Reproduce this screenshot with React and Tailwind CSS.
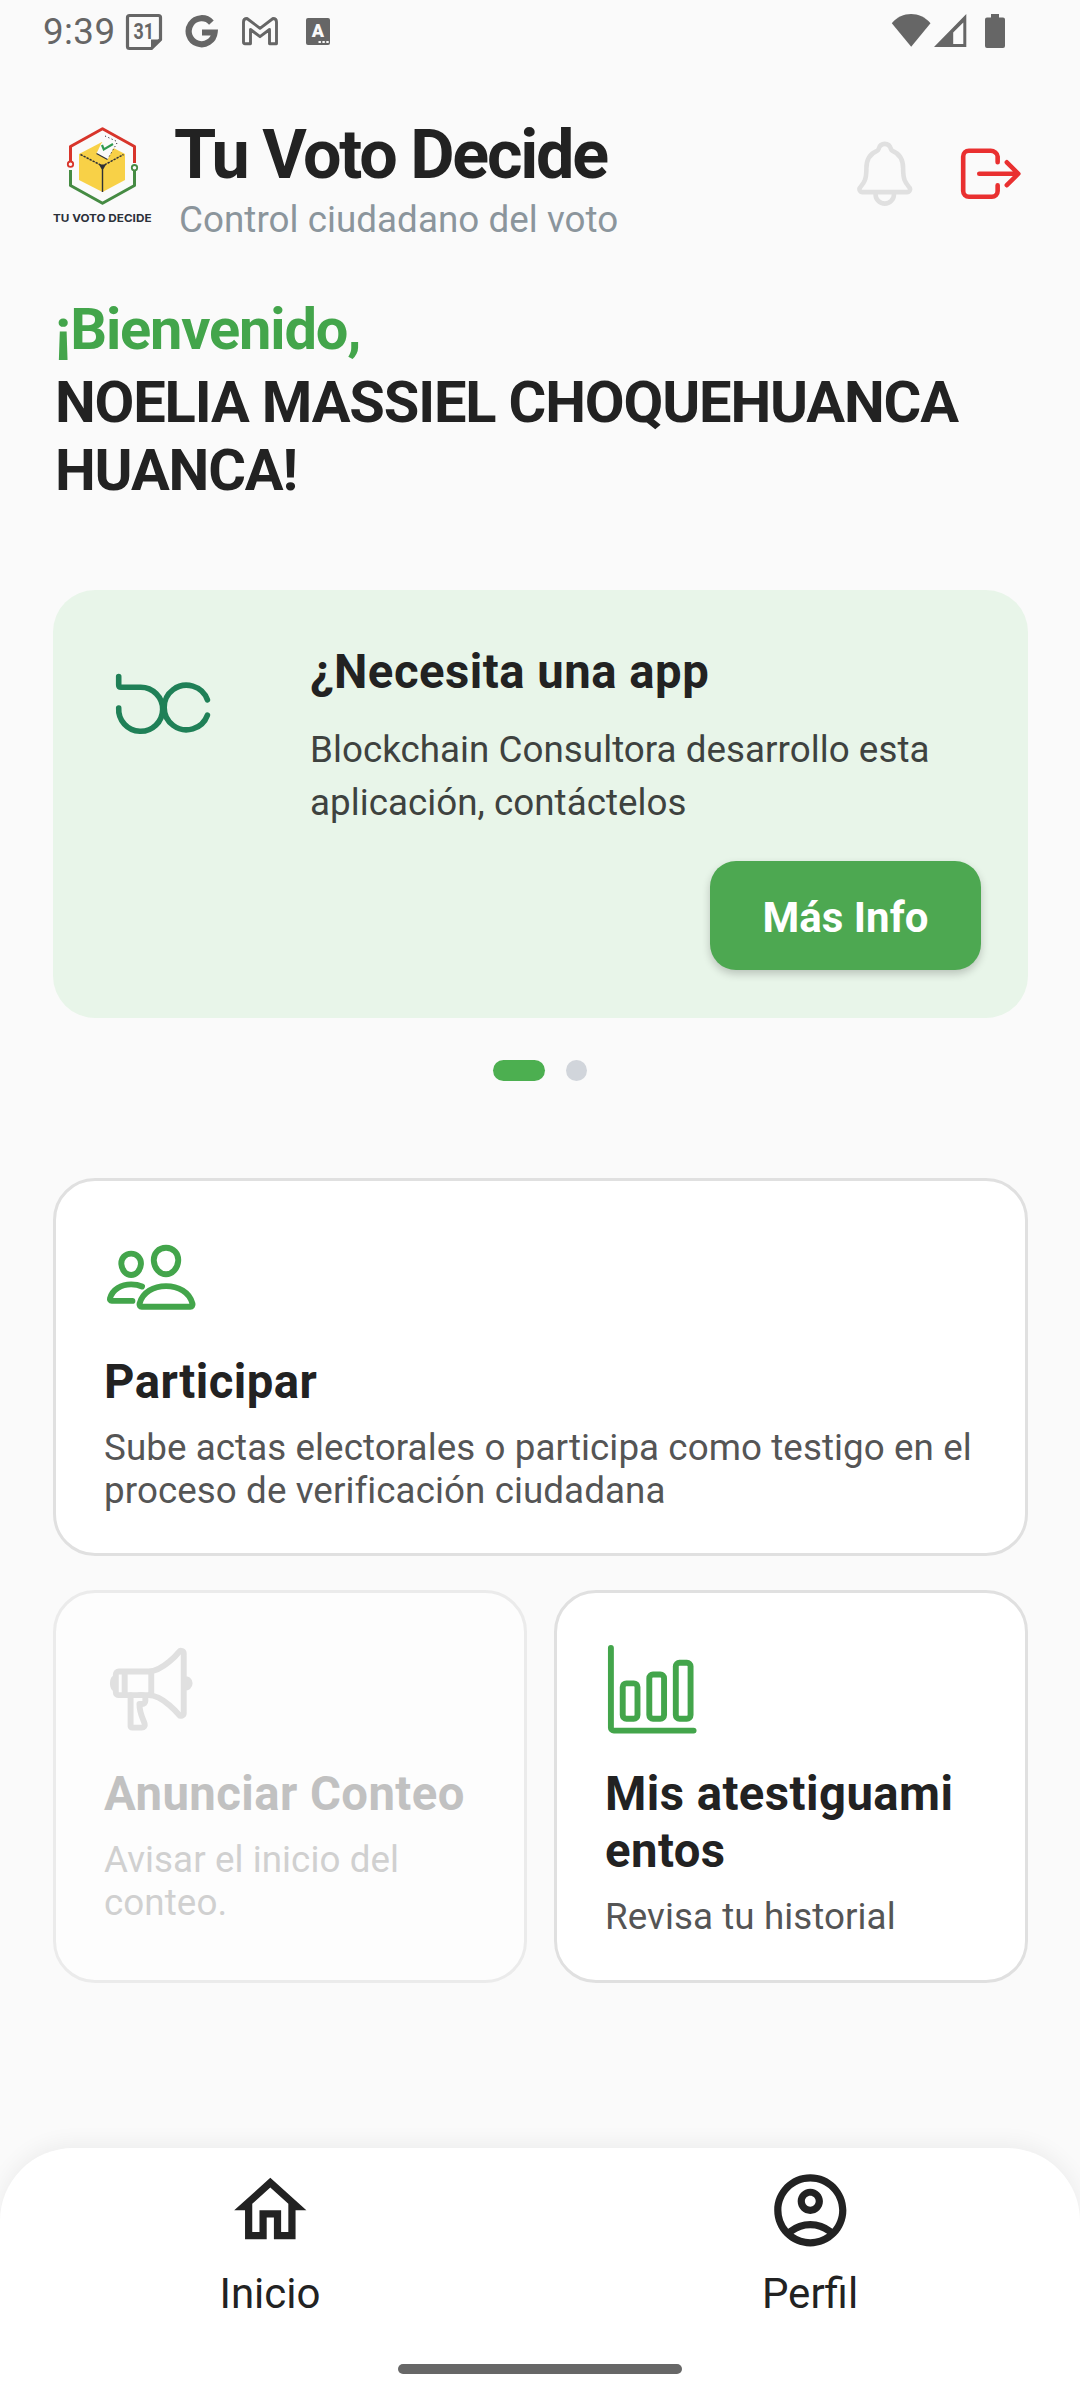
import React from "react";
import {
  IoNotificationsOutline,
  IoLogOutOutline,
  IoPeopleOutline,
  IoMegaphoneOutline,
  IoBarChartOutline,
} from "react-icons/io5";
import { MdOutlineHome, MdOutlineAccountCircle } from "react-icons/md";

function StatusBar() {
  return (
    <div className="flex h-[60px] shrink-0 items-start pl-[43px] pr-[75px] text-[#666666]">
      <span className="mt-[10px] w-[72px] whitespace-nowrap text-[36.75px] leading-[43px] tracking-[0.4px]">9:39</span>
      <svg className="ml-[10px] mt-[13px] h-[38px] w-[38px]" viewBox="0 0 38 38" fill="none">
        <path d="M4.5 2.5H33.5Q35.5 2.5 35.5 4.5V26.5L26.5 35.5H4.5Q2.5 35.5 2.5 33.5V4.5Q2.5 2.5 4.5 2.5Z" stroke="currentColor" strokeWidth="3.2" />
        <path d="M26 36V26.5H36Z" fill="currentColor" />
        <text x="8.5" y="26" fontSize="22" fontWeight="700" textLength="20.5" lengthAdjust="spacingAndGlyphs" fill="currentColor">31</text>
      </svg>
      <svg className="ml-[22px] mt-[15px] h-[34px] w-[34px]" viewBox="0 0 34 34" fill="none">
        <path d="M26.4 7.6A13 13 0 1 0 29.6 17.5H17" stroke="currentColor" strokeWidth="6.2" />
      </svg>
      <svg className="ml-[22px] mt-[15px] h-[34px] w-[38px]" viewBox="0 0 38 34" fill="none">
        <path d="M2.5 7Q2.5 3.5 6 3.5L19 13.3L32 3.5Q35.5 3.5 35.5 7V28.7H28.5V14.5L19 21.7L9.5 14.5V28.7H4Q2.5 28.7 2.5 27Z" stroke="currentColor" strokeWidth="2.9" strokeLinejoin="round" />
      </svg>
      <svg className="ml-[27px] mt-[18px] h-[27px] w-[24px]" viewBox="0 0 24 27">
        <rect width="24" height="27" rx="2" fill="currentColor" />
        <text x="12" y="19" fontSize="18" fontWeight="900" textAnchor="middle" fill="#fafafa">A</text>
        <path d="M12.5 23h2.4v2h-2.4zM16.4 23h2.4v2h-2.4zM20.3 23h2.4v2h-2.4z" fill="#fafafa" />
      </svg>
      <div className="ml-auto flex pt-[14px]">
        <svg className="h-[34px] w-[40px]" viewBox="0 0 40 34">
          <path d="M.8 9.2C11-3 29-3 39.5 9.2L20.2 32.8Z" fill="currentColor" />
        </svg>
        <svg className="ml-[3px] h-[34px] w-[33px]" viewBox="0 0 33 34">
          <path fillRule="evenodd" d="M0 33L32.3 0V33ZM19.2 30H29.3V8.5L19.2 18.5Z" fill="currentColor" />
        </svg>
        <svg className="ml-[18.5px] h-[34px] w-[20px]" viewBox="0 0 20 34">
          <path d="M6 0H14V3.5H18Q20 3.5 20 5.5V32Q20 34 18 34H2Q0 34 0 32V5.5Q0 3.5 2 3.5H6Z" fill="currentColor" />
        </svg>
      </div>
    </div>
  );
}

function VoteLogo() {
  return (
    <svg className="h-[104px] w-[102px]" viewBox="52 122 102 104" fill="none">
      <path d="M70.5 161V146.5L102.5 128.7L134.5 146.5V163" stroke="#d8352b" strokeWidth="3" strokeLinejoin="round" />
      <path d="M134.5 171V185.5L102.5 203.3L70.5 185.5V170" stroke="#458b43" strokeWidth="3" strokeLinejoin="round" />
      <circle cx="70.5" cy="164.2" r="2.7" stroke="#d8352b" strokeWidth="1.8" />
      <circle cx="134.5" cy="167.7" r="2.7" stroke="#458b43" strokeWidth="1.8" />
      <path d="M79 154L102 142L125 154V180L102.5 192L79 180Z" fill="#f8d147" />
      <path d="M107.5 134.5L117 142L107.5 159.5L96.5 153.5L101 144Z" fill="#fafafa" />
      <path d="M105 136L117 141.5M117 143L108 158.5" stroke="#2f3136" strokeWidth="1" strokeDasharray="1.2 2.4" />
      <path d="M96.5 153.5L107.5 159.5" stroke="#2f3136" strokeWidth="1.2" />
      <path d="M80.5 154.5L102.5 166L123.5 154.5" stroke="#2f3136" strokeWidth="1.5" strokeDasharray="2.4 1" />
      <path d="M99 164.5H106L103.2 169.5V192H101.8V169.5Z" fill="#2f3136" />
      <path d="M102 145L103.8 149.5L113 144" stroke="#2f9a4f" strokeWidth="2.2" />
      <text x="53" y="222" fontFamily="Inter, sans-serif" fontSize="11" fontWeight="700" textLength="98.5" lengthAdjust="spacingAndGlyphs" fill="#2b3039">TU VOTO DECIDE</text>
    </svg>
  );
}

function Header() {
  return (
    <header className="flex h-[235px] items-start pl-[52px] pr-[52.5px] pt-[59px]">
      <div className="mt-[3px]">
        <VoteLogo />
      </div>
      <div className="ml-[20px]">
        <h1 className="whitespace-nowrap text-[68.25px] font-bold leading-[72px] tracking-[-2.25px] text-[#222222]">Tu Voto Decide</h1>
        <p className="ml-[5px] mt-[7px] whitespace-nowrap text-[36.75px] leading-[43px] tracking-[0.05px] text-[#8b959c]">Control ciudadano del voto</p>
      </div>
      <div className="ml-auto mt-[18px] flex gap-[32.5px]">
        <IoNotificationsOutline className="h-[73.5px] w-[73.5px] text-[#e0e0e0]" />
        <IoLogOutOutline className="h-[73.5px] w-[73.5px] text-[#e93030]" />
      </div>
    </header>
  );
}

function Promo() {
  return (
    <section className="mt-[86px] flex h-[428px] rounded-[42px] bg-[#e8f5e9]">
      <svg className="ml-[62px] mt-[83px] h-[62px] w-[98px] shrink-0" viewBox="115 673 98 62" fill="none" stroke="#1f8057" strokeWidth="5.6" strokeLinecap="round" strokeLinejoin="round">
        <path d="M118.7 676.5V685Q118.7 687.3 121 687.3H140.5A22 22 0 1 1 118.7 708" />
        <path d="M207.4 699.8A22.3 22.3 0 1 0 207.4 715.2" />
      </svg>
      <div className="ml-[97.5px] flex flex-1 flex-col pr-[47px] pt-[54px]">
        <h2 className="text-[47.25px] font-bold leading-[57px] tracking-[0.5px] text-[#222222]">¿Necesita una app</h2>
        <p className="mt-[22px] text-[36.75px] leading-[53px] tracking-[0.04px] text-[#3e423f]">Blockchain Consultora desarrollo esta aplicación, contáctelos</p>
        <button className="mt-[32px] flex h-[109px] w-[271px] items-center justify-center self-end rounded-[26px] bg-[#4da851] pl-[1px] pt-[4px] text-[42px] font-bold leading-[50px] text-white shadow-[0_4px_8px_rgba(0,0,0,0.2)]">Más Info</button>
      </div>
    </section>
  );
}

function Card({ Icon, title, text, className = "", disabled }) {
  return (
    <div className={"rounded-[42px] border-[3px] pl-[48.5px] pt-[49px] " + (disabled ? "border-[#ebebeb] bg-[#fdfdfd] " : "border-[#e0e0e0] bg-white ") + className}>
      <Icon className={"-ml-[0.5px] h-[94.5px] w-[94.5px] " + (disabled ? "text-[#e0e0e0]" : "text-[#43a54b]")} />
      <h3 className={"mt-[29px] break-all text-[47.25px] font-bold leading-[57px] tracking-[0.45px] " + (disabled ? "text-[#c1c1c1]" : "text-[#222222]")}>{title}</h3>
      <p className={"mt-[15px] text-[36.75px] leading-[43px] tracking-[0.08px] " + (disabled ? "text-[#d0d0d0]" : "text-[#555555]")}>{text}</p>
    </div>
  );
}

function Tab({ Icon, label }) {
  return (
    <div className="flex flex-1 flex-col items-center pt-[19px] text-[#222222]">
      <Icon className="h-[86.6px] w-[86.6px]" />
      <span className="mt-[15px] text-[42px] leading-[49px]">{label}</span>
    </div>
  );
}

export default function App() {
  return (
    <div className="flex h-[2400px] w-[1080px] flex-col overflow-hidden bg-[#fafafa] font-['Roboto',sans-serif]">
      <StatusBar />
      <Header />
      <main className="flex flex-1 flex-col px-[52.5px]">
        <div className="pl-[2.5px] text-[57.75px] font-bold leading-[68px] tracking-[-1.15px]">
          <p className="text-[#43a54b]">¡Bienvenido,</p>
          <p className="mt-[5px] text-[#222222]">NOELIA MASSIEL CHOQUEHUANCA HUANCA!</p>
        </div>
        <Promo />
        <div className="mt-[42px] flex justify-center gap-[21px]">
          <span className="h-[21px] w-[52px] rounded-full bg-[#4caf50]" />
          <span className="h-[21px] w-[21px] rounded-full bg-[#d1d5db]" />
        </div>
        <Card Icon={IoPeopleOutline} title="Participar" text="Sube actas electorales o participa como testigo en el proceso de verificación ciudadana" className="mt-[97px] h-[378px] pr-[40px]" />
        <div className="mt-[34px] flex justify-between">
          <Card disabled Icon={IoMegaphoneOutline} title="Anunciar Conteo" text="Avisar el inicio del conteo." className="h-[393px] w-[474px] pr-[48px]" />
          <Card Icon={IoBarChartOutline} title="Mis atestiguamientos" text="Revisa tu historial" className="h-[393px] w-[474px] pr-[54px]" />
        </div>
      </main>
      <nav className="flex h-[252px] flex-col items-center rounded-t-[73px] bg-white shadow-[0_-4px_22px_rgba(0,0,0,0.06)]">
        <div className="flex h-[216px] w-full">
          <Tab Icon={MdOutlineHome} label="Inicio" />
          <Tab Icon={MdOutlineAccountCircle} label="Perfil" />
        </div>
        <span className="h-[10px] w-[284px] rounded-full bg-[#676767]" />
      </nav>
    </div>
  );
}
